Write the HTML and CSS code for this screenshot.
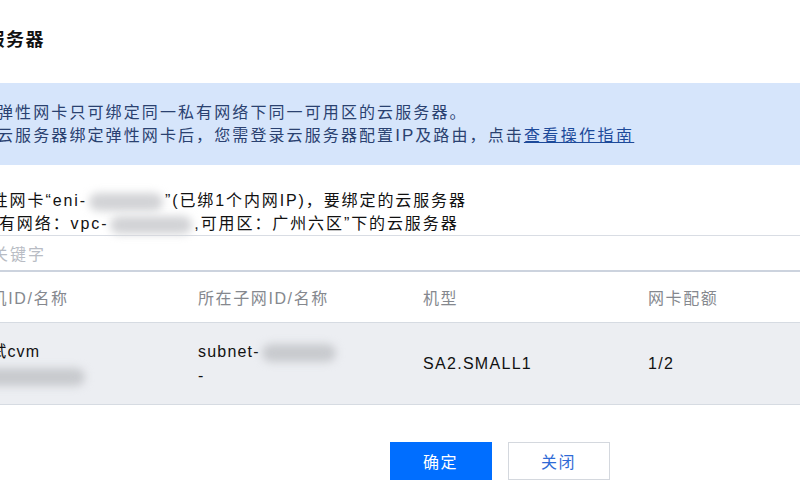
FILE: index.html
```html
<!DOCTYPE html>
<html lang="zh-CN">
<head>
<meta charset="utf-8">
<title>绑定云服务器</title>
<link rel="stylesheet" href="styles.css">
</head>
<body>
<div class="dialog">
  <h2 class="title">绑定云服务器</h2>
  <div class="notice">
    <p class="notice-line">弹性网卡只可绑定同一私有网络下同一可用区的云服务器。</p>
    <p class="notice-line">云服务器绑定弹性网卡后，您需登录云服务器配置<span class="latin-wide">IP</span>及路由，点击<a class="link" href="#">查看操作指南</a></p>
  </div>
  <div class="info">
    <p class="info-line">当前弹性网卡“eni-<span class="blur blur-eni"></span>”(已绑1个内网IP)，要绑定的云服务器</p>
    <p class="info-line">需为“私有网络：vpc-<span class="blur blur-vpc"></span>,可用区：广州六区”下的云服务器</p>
  </div>
  <div class="search">
    <span class="placeholder">请输入关键字</span>
  </div>
  <div class="table">
    <div class="thead">
      <div class="cell">主机ID/名称</div>
      <div class="cell">所在子网ID/名称</div>
      <div class="cell">机型</div>
      <div class="cell">网卡配额</div>
    </div>
    <div class="trow">
      <div class="cell stack">
        <span>测试cvm</span>
        <span class="blur-line"><span class="blur blur-ins"></span></span>
      </div>
      <div class="cell stack">
        <span>subnet-<span class="blur blur-sub"></span></span>
        <span>-</span>
      </div>
      <div class="cell latin">SA2.SMALL1</div>
      <div class="cell latin">1/2</div>
    </div>
  </div>
  <div class="footer">
    <button class="btn btn-primary" type="button">确定</button>
    <button class="btn btn-default" type="button">关闭</button>
  </div>
</div>
</body>
</html>
```

FILE: styles.css
```css
html, body {
  margin: 0;
  padding: 0;
  background: #ffffff;
  overflow: hidden;
}

body {
  width: 800px;
  height: 500px;
  font-family: "Liberation Sans", "Noto Sans CJK SC", sans-serif;
  color: #1a1a1a;
}

.dialog {
  margin-left: -62px;
  width: 1123px;
  display: flex;
  flex-direction: column;
}

.title {
  margin: 27px 0 0 -10px;
  font-size: 18px;
  line-height: 26px;
  font-weight: bold;
  letter-spacing: 1.5px;
  color: #111;
}

.notice {
  margin-top: 30px;
  background: #d6e5fb;
  padding: 18px 0 18px 59px;
}

.notice-line {
  margin: 0;
  font-size: 16px;
  line-height: 23px;
  letter-spacing: 2.1px;
  color: #2a4170;
}

.latin-wide {
  font-size: 17px;
  letter-spacing: 2px;
}

.link {
  color: #1d4a9a;
  text-decoration: underline;
  letter-spacing: 2.4px;
}

.info {
  margin-top: 24px;
}

.info-line {
  margin: 0;
  font-size: 16px;
  line-height: 23px;
  letter-spacing: 1.9px;
  color: #111;
  white-space: nowrap;
}

.blur {
  display: inline-block;
  vertical-align: middle;
  height: 18px;
  background: #d2d3d6;
  border-radius: 9px;
  filter: blur(4px);
}

.blur-eni { width: 74px; margin: 0 2px; }
.blur-vpc { width: 82px; margin: 0 2px; }
.blur-sub { width: 74px; margin-left: 2px; background: #c8cace; }
.blur-ins { width: 110px; margin-left: 2px; background: #c8cace; }

.search {
  height: 34px;
  border-top: 1px solid #d9dde4;
  border-bottom: 2px solid #ccd3de;
  display: flex;
  align-items: center;
}

.placeholder {
  font-size: 16px;
  letter-spacing: 2px;
  color: #b8bcc4;
}

.table {
  display: flex;
  flex-direction: column;
}

.thead, .trow {
  display: grid;
  grid-template-columns: 225px 225px 225px 1fr;
  padding-left: 35px;
}

.thead {
  height: 50px;
  align-items: center;
  border-bottom: 1px solid #d6dbe2;
}

.thead .cell {
  font-size: 16px;
  letter-spacing: 1.6px;
  color: #85888e;
}

.trow {
  background: #eceef2;
  padding-top: 17px;
  padding-bottom: 16px;
  border-bottom: 1px solid #d6dbe2;
  align-items: center;
}

.trow .cell {
  font-size: 16px;
  line-height: 24px;
  letter-spacing: 1.2px;
  color: #111;
}

.stack {
  display: flex;
  flex-direction: column;
}

.trow .latin {
  letter-spacing: 1.3px;
}

.footer {
  margin-top: 37px;
  display: flex;
  justify-content: center;
  gap: 16px;
}

.btn {
  width: 102px;
  height: 38px;
  font-family: "Liberation Sans", "Noto Sans CJK SC", sans-serif;
  font-size: 16px;
  letter-spacing: 1.5px;
  border-radius: 0;
  cursor: pointer;
}

.btn-primary {
  background: #006eff;
  border: 1px solid #006eff;
  color: #ffffff;
}

.btn-default {
  background: #ffffff;
  border: 1px solid #d4d8de;
  color: #2f6bd6;
}
```
